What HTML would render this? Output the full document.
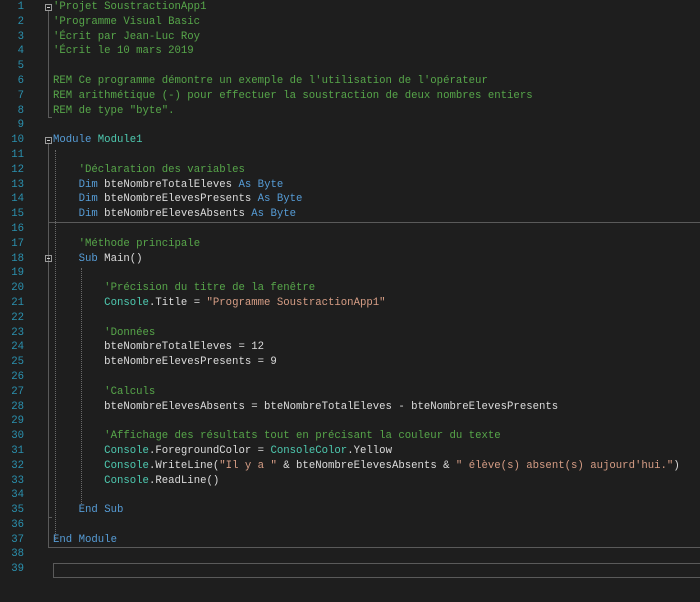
<!DOCTYPE html>
<html><head><meta charset="utf-8"><style>
html,body{margin:0;padding:0;background:#1e1e1e;width:700px;height:602px;overflow:hidden;position:relative}
pre{margin:0;position:absolute;top:0;font-family:"Liberation Mono",monospace;font-size:10.67px;line-height:14.8px;color:#dcdcdc}
#nums{left:0;width:24px;text-align:right;color:#2b91af}
#code{left:53px}
.c{color:#57a64a}.k{color:#569cd6}.t{color:#4ec9b0}.s{color:#d69d85}
.ln{position:absolute;background:#5a5a5a}
.dot{position:absolute;width:0;border-left:1px dotted #6a6a6a}
.box{position:absolute;width:7px;height:7px;border:1px solid #9a9a9a;box-sizing:border-box}
.box:after{content:"";position:absolute;left:1px;top:2px;width:3px;height:1px;background:#cfcfcf}
</style></head><body>
<pre id="nums">1
2
3
4
5
6
7
8
9
10
11
12
13
14
15
16
17
18
19
20
21
22
23
24
25
26
27
28
29
30
31
32
33
34
35
36
37
38
39</pre>
<pre id="code"><span class="c">'Projet SoustractionApp1
'Programme Visual Basic
'Écrit par Jean-Luc Roy
'Écrit le 10 mars 2019

REM Ce programme démontre un exemple de l'utilisation de l'opérateur
REM arithmétique (-) pour effectuer la soustraction de deux nombres entiers
REM de type "byte".</span>

<span class="k">Module</span> <span class="t">Module1</span>

    <span class="c">'Déclaration des variables</span>
    <span class="k">Dim</span> bteNombreTotalEleves <span class="k">As</span> <span class="k">Byte</span>
    <span class="k">Dim</span> bteNombreElevesPresents <span class="k">As</span> <span class="k">Byte</span>
    <span class="k">Dim</span> bteNombreElevesAbsents <span class="k">As</span> <span class="k">Byte</span>

    <span class="c">'Méthode principale</span>
    <span class="k">Sub</span> Main()

        <span class="c">'Précision du titre de la fenêtre</span>
        <span class="t">Console</span>.Title = <span class="s">"Programme SoustractionApp1"</span>

        <span class="c">'Données</span>
        bteNombreTotalEleves = 12
        bteNombreElevesPresents = 9

        <span class="c">'Calculs</span>
        bteNombreElevesAbsents = bteNombreTotalEleves - bteNombreElevesPresents

        <span class="c">'Affichage des résultats tout en précisant la couleur du texte</span>
        <span class="t">Console</span>.ForegroundColor = <span class="t">ConsoleColor</span>.Yellow
        <span class="t">Console</span>.WriteLine(<span class="s">"Il y a "</span> &amp; bteNombreElevesAbsents &amp; <span class="s">" élève(s) absent(s) aujourd'hui."</span>)
        <span class="t">Console</span>.ReadLine()

    <span class="k">End</span> <span class="k">Sub</span>

<span class="k">End</span> <span class="k">Module</span>
</pre>
<!-- outlining -->
<div class="box" style="left:45px;top:4px"></div>
<div class="ln" style="left:48px;top:11px;width:1px;height:107px"></div>
<div class="ln" style="left:48px;top:117px;width:4px;height:1px"></div>
<div class="box" style="left:45px;top:137px"></div>
<div class="ln" style="left:48px;top:144px;width:1px;height:404px"></div>
<div class="box" style="left:45px;top:255px"></div>
<div class="ln" style="left:48px;top:517px;width:4px;height:1px"></div>
<div class="dot" style="left:55px;top:150px;height:390px"></div>
<div class="dot" style="left:81px;top:268px;height:236px"></div>
<!-- separators -->
<div class="ln" style="left:48px;top:222px;width:652px;height:1px"></div>
<div class="ln" style="left:48px;top:547px;width:652px;height:1px"></div>
<div class="ln" style="left:53px;top:563px;width:647px;height:1px"></div>
<div class="ln" style="left:53px;top:577px;width:647px;height:1px"></div>
<div class="ln" style="left:53px;top:563px;width:1px;height:15px"></div>
</body></html>
